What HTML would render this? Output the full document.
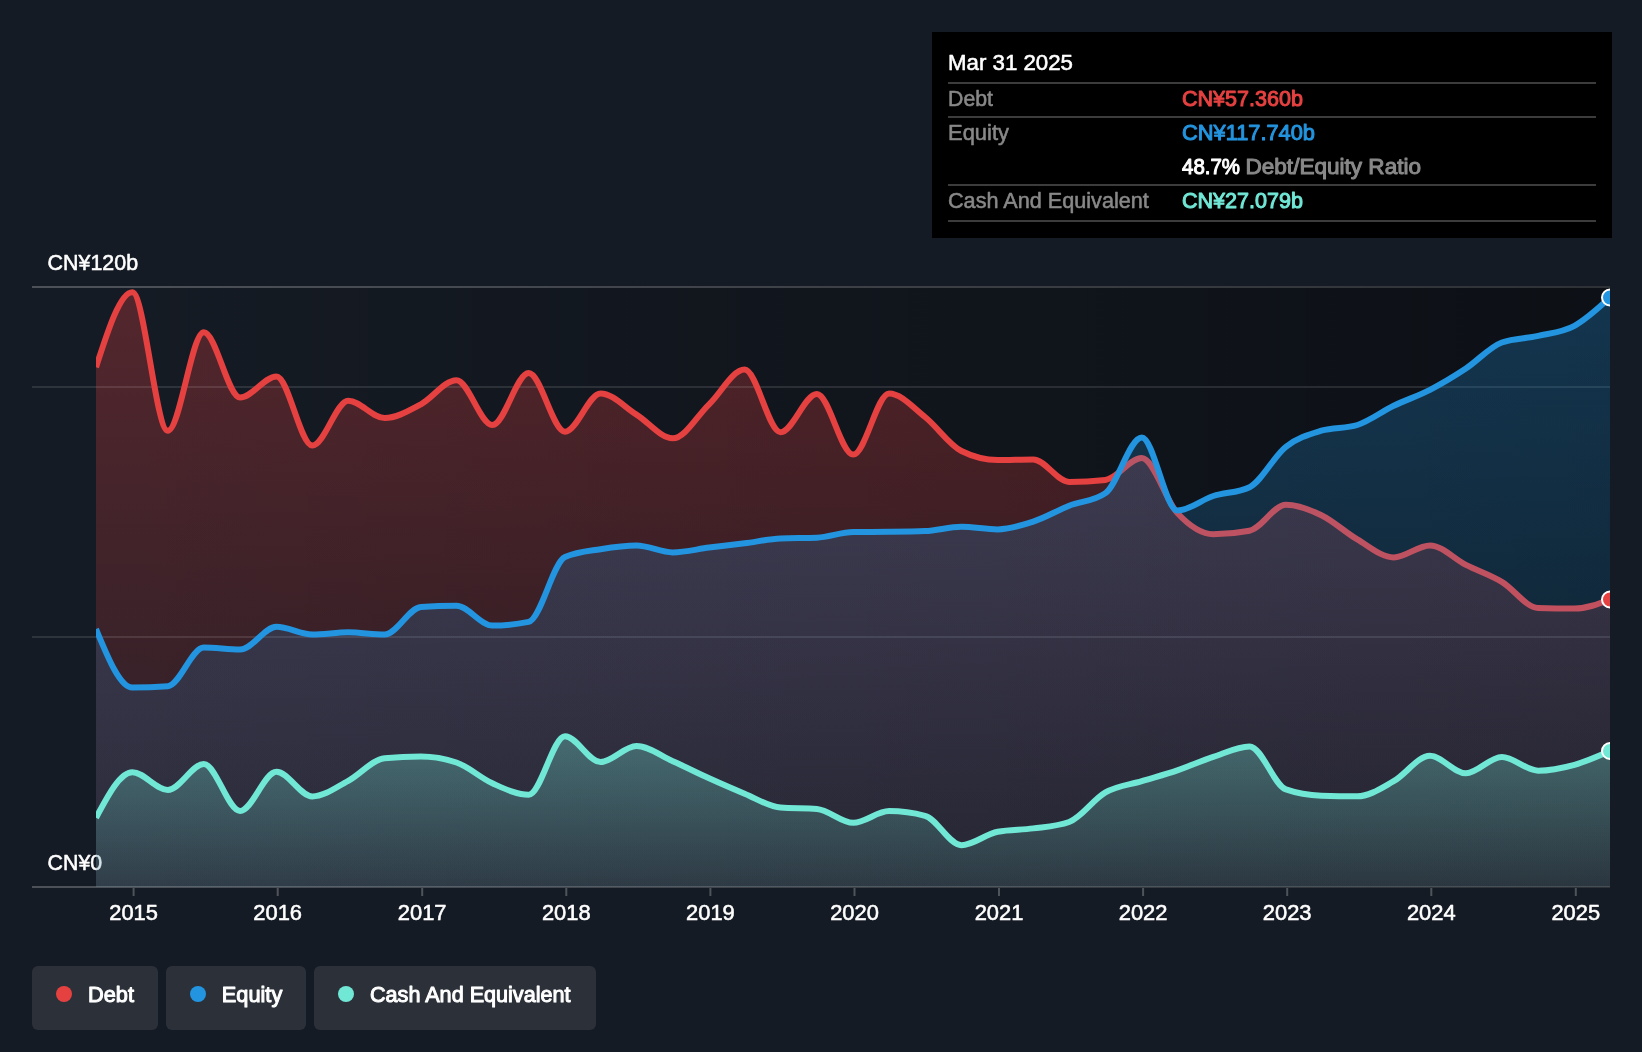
<!DOCTYPE html>
<html><head><meta charset="utf-8"><title>Debt to Equity History</title>
<style>
html,body{margin:0;padding:0;background:#151b24;}
body{width:1642px;height:1052px;overflow:hidden;font-family:"Liberation Sans",sans-serif;}
svg{display:block;}
text{font-family:"Liberation Sans",sans-serif;}
</style></head><body>
<svg width="1642" height="1052" viewBox="0 0 1642 1052" font-family="'Liberation Sans', sans-serif">
<defs>
<linearGradient id="plotbg" x1="0" y1="0" x2="1" y2="0">
<stop offset="0" stop-color="#000" stop-opacity="0"/>
<stop offset="1" stop-color="#000" stop-opacity="0.40"/>
</linearGradient>
<linearGradient id="gDebt" gradientUnits="userSpaceOnUse" x1="0" y1="292" x2="0" y2="887">
<stop offset="0" stop-color="#e64141" stop-opacity="0.30"/>
<stop offset="1" stop-color="#e64141" stop-opacity="0.10"/>
</linearGradient>
<linearGradient id="gEquity" gradientUnits="userSpaceOnUse" x1="0" y1="297" x2="0" y2="887">
<stop offset="0" stop-color="#2394df" stop-opacity="0.28"/>
<stop offset="1" stop-color="#2394df" stop-opacity="0.10"/>
</linearGradient>
<linearGradient id="gCash" gradientUnits="userSpaceOnUse" x1="0" y1="736" x2="0" y2="887">
<stop offset="0" stop-color="#71e7d6" stop-opacity="0.33"/>
<stop offset="1" stop-color="#71e7d6" stop-opacity="0.10"/>
</linearGradient>
<mask id="tm" maskUnits="userSpaceOnUse" x="0" y="0" width="1642" height="1052"><rect x="0" y="0" width="1642" height="1052" fill="#fff"/></mask>
<clipPath id="clip"><rect x="96" y="270" width="1514" height="640"/></clipPath>
</defs>
<rect width="1642" height="1052" fill="#151b24"/>
<rect x="32" y="286" width="1578" height="2" fill="#fff" fill-opacity="0.24"/>
<rect x="32" y="886" width="1578" height="2" fill="#fff" fill-opacity="0.24"/>
<rect x="96" y="286" width="1514" height="602" fill="url(#plotbg)"/>
<g mask="url(#tm)"><text x="47.6" y="269.8" fill="#fff" stroke="#fff" stroke-width="0.55" stroke-linejoin="round" font-size="21.95" text-anchor="start" textLength="90.5" lengthAdjust="spacingAndGlyphs">CN¥120b</text></g>
<g mask="url(#tm)"><text x="47.6" y="869.8" fill="#fff" stroke="#fff" stroke-width="0.55" stroke-linejoin="round" font-size="21.95" text-anchor="start" textLength="54.5" lengthAdjust="spacingAndGlyphs">CN¥0</text></g>
<g clip-path="url(#clip)">
<path d="M96.00,367.30C108.11,329.75,120.21,292.20,132.32,292.20C144.16,292.20,156.01,430.80,167.85,430.80C179.83,430.80,191.80,332.30,203.78,332.30C215.88,332.30,227.99,397.50,240.10,397.50C252.20,397.50,264.31,376.40,276.42,376.40C288.39,376.40,300.37,445.60,312.34,445.60C324.32,445.60,336.29,400.70,348.27,400.70C360.37,400.70,372.48,418.00,384.59,418.00C396.69,418.00,408.80,410.71,420.91,404.30C432.75,398.03,444.60,380.20,456.44,380.20C468.41,380.20,480.39,425.00,492.36,425.00C504.47,425.00,516.58,373.10,528.68,373.10C540.79,373.10,552.90,431.70,565.00,431.70C576.85,431.70,588.69,393.40,600.54,393.40C612.51,393.40,624.49,407.16,636.46,414.60C648.57,422.12,660.67,438.30,672.78,438.30C684.89,438.30,696.99,415.88,709.10,404.30C720.94,392.97,732.79,369.60,744.63,369.60C756.61,369.60,768.58,432.20,780.56,432.20C792.66,432.20,804.77,394.00,816.88,394.00C828.98,394.00,841.09,454.60,853.20,454.60C865.17,454.60,877.15,393.40,889.12,393.40C901.10,393.40,913.07,407.47,925.05,417.00C937.15,426.63,949.26,445.00,961.37,451.00C973.48,457.00,985.58,460.00,997.69,460.00C1009.53,460.00,1021.38,459.40,1033.22,459.40C1045.19,459.40,1057.17,481.90,1069.14,481.90C1081.25,481.90,1093.36,481.23,1105.46,479.90C1117.57,478.57,1129.68,458.00,1141.79,458.00C1153.63,458.00,1165.47,500.31,1177.32,513.00C1189.29,525.83,1201.27,534.20,1213.24,534.20C1225.35,534.20,1237.45,533.03,1249.56,530.70C1261.67,528.37,1273.77,504.70,1285.88,504.70C1297.73,504.70,1309.57,509.47,1321.41,515.20C1333.39,520.99,1345.36,532.39,1357.34,539.40C1369.44,546.48,1381.55,557.40,1393.66,557.40C1405.76,557.40,1417.87,545.40,1429.98,545.40C1441.95,545.40,1453.93,558.82,1465.90,564.90C1477.88,570.98,1489.85,574.77,1501.83,581.90C1513.94,589.11,1526.04,607.60,1538.15,608.00C1550.26,608.40,1562.36,608.60,1574.47,608.60C1586.31,608.60,1598.16,604.05,1610.00,599.50L1610.00,887.00L96.00,887.00Z" fill="url(#gDebt)" stroke="none"/>
</g>
<rect x="32" y="386" width="1578" height="2" fill="#fff" fill-opacity="0.11"/>
<rect x="32" y="636" width="1578" height="2" fill="#fff" fill-opacity="0.11"/>
<g clip-path="url(#clip)">
<path d="M96.00,367.30C108.11,329.75,120.21,292.20,132.32,292.20C144.16,292.20,156.01,430.80,167.85,430.80C179.83,430.80,191.80,332.30,203.78,332.30C215.88,332.30,227.99,397.50,240.10,397.50C252.20,397.50,264.31,376.40,276.42,376.40C288.39,376.40,300.37,445.60,312.34,445.60C324.32,445.60,336.29,400.70,348.27,400.70C360.37,400.70,372.48,418.00,384.59,418.00C396.69,418.00,408.80,410.71,420.91,404.30C432.75,398.03,444.60,380.20,456.44,380.20C468.41,380.20,480.39,425.00,492.36,425.00C504.47,425.00,516.58,373.10,528.68,373.10C540.79,373.10,552.90,431.70,565.00,431.70C576.85,431.70,588.69,393.40,600.54,393.40C612.51,393.40,624.49,407.16,636.46,414.60C648.57,422.12,660.67,438.30,672.78,438.30C684.89,438.30,696.99,415.88,709.10,404.30C720.94,392.97,732.79,369.60,744.63,369.60C756.61,369.60,768.58,432.20,780.56,432.20C792.66,432.20,804.77,394.00,816.88,394.00C828.98,394.00,841.09,454.60,853.20,454.60C865.17,454.60,877.15,393.40,889.12,393.40C901.10,393.40,913.07,407.47,925.05,417.00C937.15,426.63,949.26,445.00,961.37,451.00C973.48,457.00,985.58,460.00,997.69,460.00C1009.53,460.00,1021.38,459.40,1033.22,459.40C1045.19,459.40,1057.17,481.90,1069.14,481.90C1081.25,481.90,1093.36,481.23,1105.46,479.90C1117.57,478.57,1129.68,458.00,1141.79,458.00C1153.63,458.00,1165.47,500.31,1177.32,513.00C1189.29,525.83,1201.27,534.20,1213.24,534.20C1225.35,534.20,1237.45,533.03,1249.56,530.70C1261.67,528.37,1273.77,504.70,1285.88,504.70C1297.73,504.70,1309.57,509.47,1321.41,515.20C1333.39,520.99,1345.36,532.39,1357.34,539.40C1369.44,546.48,1381.55,557.40,1393.66,557.40C1405.76,557.40,1417.87,545.40,1429.98,545.40C1441.95,545.40,1453.93,558.82,1465.90,564.90C1477.88,570.98,1489.85,574.77,1501.83,581.90C1513.94,589.11,1526.04,607.60,1538.15,608.00C1550.26,608.40,1562.36,608.60,1574.47,608.60C1586.31,608.60,1598.16,604.05,1610.00,599.50" fill="none" stroke="#e64141" stroke-width="6" stroke-linejoin="round"/>
<path d="M96.00,629.00C108.11,658.30,120.21,687.60,132.32,687.60C144.16,687.60,156.01,687.13,167.85,686.20C179.83,685.26,191.80,647.60,203.78,647.60C215.88,647.60,227.99,649.60,240.10,649.60C252.20,649.60,264.31,626.80,276.42,626.80C288.39,626.80,300.37,634.60,312.34,634.60C324.32,634.60,336.29,632.30,348.27,632.30C360.37,632.30,372.48,634.60,384.59,634.60C396.69,634.60,408.80,607.99,420.91,607.10C432.75,606.23,444.60,605.80,456.44,605.80C468.41,605.80,480.39,625.60,492.36,625.60C504.47,625.60,516.58,624.37,528.68,621.90C540.79,619.43,552.90,562.32,565.00,557.00C576.85,551.80,588.69,551.11,600.54,549.20C612.51,547.27,624.49,545.50,636.46,545.50C648.57,545.50,660.67,552.40,672.78,552.40C684.89,552.40,696.99,549.13,709.10,547.60C720.94,546.10,732.79,544.81,744.63,543.30C756.61,541.78,768.58,539.03,780.56,538.50C792.66,537.97,804.77,538.23,816.88,537.70C828.98,537.17,841.09,532.13,853.20,532.00C865.17,531.87,877.15,531.93,889.12,531.80C901.10,531.67,913.07,531.57,925.05,531.10C937.15,530.63,949.26,526.80,961.37,526.80C973.48,526.80,985.58,529.40,997.69,529.40C1009.53,529.40,1021.38,525.60,1033.22,521.70C1045.19,517.76,1057.17,510.55,1069.14,505.80C1081.25,501.00,1093.36,501.57,1105.46,493.10C1117.57,484.63,1129.68,437.40,1141.79,437.40C1153.63,437.40,1165.47,510.50,1177.32,510.50C1189.29,510.50,1201.27,499.87,1213.24,496.00C1225.35,492.08,1237.45,493.07,1249.56,487.20C1261.67,481.33,1273.77,456.23,1285.88,446.80C1297.73,437.57,1309.57,434.33,1321.41,430.70C1333.39,427.03,1345.36,428.80,1357.34,425.00C1369.44,421.16,1381.55,411.67,1393.66,405.80C1405.76,399.93,1417.87,396.06,1429.98,389.80C1441.95,383.61,1453.93,376.38,1465.90,368.50C1477.88,360.62,1489.85,346.85,1501.83,342.50C1513.94,338.10,1526.04,338.68,1538.15,335.90C1550.26,333.12,1562.36,332.34,1574.47,325.80C1586.31,319.40,1598.16,308.45,1610.00,297.50L1610.00,887.00L96.00,887.00Z" fill="url(#gEquity)" stroke="none"/>
<path d="M96.00,629.00C108.11,658.30,120.21,687.60,132.32,687.60C144.16,687.60,156.01,687.13,167.85,686.20C179.83,685.26,191.80,647.60,203.78,647.60C215.88,647.60,227.99,649.60,240.10,649.60C252.20,649.60,264.31,626.80,276.42,626.80C288.39,626.80,300.37,634.60,312.34,634.60C324.32,634.60,336.29,632.30,348.27,632.30C360.37,632.30,372.48,634.60,384.59,634.60C396.69,634.60,408.80,607.99,420.91,607.10C432.75,606.23,444.60,605.80,456.44,605.80C468.41,605.80,480.39,625.60,492.36,625.60C504.47,625.60,516.58,624.37,528.68,621.90C540.79,619.43,552.90,562.32,565.00,557.00C576.85,551.80,588.69,551.11,600.54,549.20C612.51,547.27,624.49,545.50,636.46,545.50C648.57,545.50,660.67,552.40,672.78,552.40C684.89,552.40,696.99,549.13,709.10,547.60C720.94,546.10,732.79,544.81,744.63,543.30C756.61,541.78,768.58,539.03,780.56,538.50C792.66,537.97,804.77,538.23,816.88,537.70C828.98,537.17,841.09,532.13,853.20,532.00C865.17,531.87,877.15,531.93,889.12,531.80C901.10,531.67,913.07,531.57,925.05,531.10C937.15,530.63,949.26,526.80,961.37,526.80C973.48,526.80,985.58,529.40,997.69,529.40C1009.53,529.40,1021.38,525.60,1033.22,521.70C1045.19,517.76,1057.17,510.55,1069.14,505.80C1081.25,501.00,1093.36,501.57,1105.46,493.10C1117.57,484.63,1129.68,437.40,1141.79,437.40C1153.63,437.40,1165.47,510.50,1177.32,510.50C1189.29,510.50,1201.27,499.87,1213.24,496.00C1225.35,492.08,1237.45,493.07,1249.56,487.20C1261.67,481.33,1273.77,456.23,1285.88,446.80C1297.73,437.57,1309.57,434.33,1321.41,430.70C1333.39,427.03,1345.36,428.80,1357.34,425.00C1369.44,421.16,1381.55,411.67,1393.66,405.80C1405.76,399.93,1417.87,396.06,1429.98,389.80C1441.95,383.61,1453.93,376.38,1465.90,368.50C1477.88,360.62,1489.85,346.85,1501.83,342.50C1513.94,338.10,1526.04,338.68,1538.15,335.90C1550.26,333.12,1562.36,332.34,1574.47,325.80C1586.31,319.40,1598.16,308.45,1610.00,297.50" fill="none" stroke="#2394df" stroke-width="6" stroke-linejoin="round"/>
<path d="M96.00,817.80C108.11,795.00,120.21,772.20,132.32,772.20C144.16,772.20,156.01,790.00,167.85,790.00C179.83,790.00,191.80,764.00,203.78,764.00C215.88,764.00,227.99,811.00,240.10,811.00C252.20,811.00,264.31,771.80,276.42,771.80C288.39,771.80,300.37,796.40,312.34,796.40C324.32,796.40,336.29,787.12,348.27,780.80C360.37,774.41,372.48,759.27,384.59,758.20C396.69,757.13,408.80,756.60,420.91,756.60C432.75,756.60,444.60,758.57,456.44,762.50C468.41,766.48,480.39,777.93,492.36,783.30C504.47,788.73,516.58,794.80,528.68,794.80C540.79,794.80,552.90,736.20,565.00,736.20C576.85,736.20,588.69,762.10,600.54,762.10C612.51,762.10,624.49,746.10,636.46,746.10C648.57,746.10,660.67,755.83,672.78,761.20C684.89,766.57,696.99,772.83,709.10,778.30C720.94,783.65,732.79,788.84,744.63,793.70C756.61,798.61,768.58,806.74,780.56,807.60C792.66,808.47,804.77,808.03,816.88,808.90C828.98,809.77,841.09,822.80,853.20,822.80C865.17,822.80,877.15,811.10,889.12,811.10C901.10,811.10,913.07,812.67,925.05,815.80C937.15,818.97,949.26,845.20,961.37,845.20C973.48,845.20,985.58,833.95,997.69,831.70C1009.53,829.50,1021.38,830.00,1033.22,828.40C1045.19,826.78,1057.17,826.27,1069.14,822.00C1081.25,817.69,1093.36,799.22,1105.46,792.40C1117.57,785.58,1129.68,784.82,1141.79,781.10C1153.63,777.46,1165.47,774.31,1177.32,770.30C1189.29,766.25,1201.27,760.87,1213.24,756.90C1225.35,752.89,1237.45,746.40,1249.56,746.40C1261.67,746.40,1273.77,785.11,1285.88,789.40C1297.73,793.60,1309.57,795.30,1321.41,795.70C1333.39,796.10,1345.36,796.30,1357.34,796.30C1369.44,796.30,1381.55,787.95,1393.66,781.20C1405.76,774.45,1417.87,755.80,1429.98,755.80C1441.95,755.80,1453.93,773.30,1465.90,773.30C1477.88,773.30,1489.85,756.90,1501.83,756.90C1513.94,756.90,1526.04,770.70,1538.15,770.70C1550.26,770.70,1562.36,768.15,1574.47,764.80C1586.31,761.52,1598.16,756.26,1610.00,751.00L1610.00,887.00L96.00,887.00Z" fill="url(#gCash)" stroke="none"/>
<path d="M96.00,817.80C108.11,795.00,120.21,772.20,132.32,772.20C144.16,772.20,156.01,790.00,167.85,790.00C179.83,790.00,191.80,764.00,203.78,764.00C215.88,764.00,227.99,811.00,240.10,811.00C252.20,811.00,264.31,771.80,276.42,771.80C288.39,771.80,300.37,796.40,312.34,796.40C324.32,796.40,336.29,787.12,348.27,780.80C360.37,774.41,372.48,759.27,384.59,758.20C396.69,757.13,408.80,756.60,420.91,756.60C432.75,756.60,444.60,758.57,456.44,762.50C468.41,766.48,480.39,777.93,492.36,783.30C504.47,788.73,516.58,794.80,528.68,794.80C540.79,794.80,552.90,736.20,565.00,736.20C576.85,736.20,588.69,762.10,600.54,762.10C612.51,762.10,624.49,746.10,636.46,746.10C648.57,746.10,660.67,755.83,672.78,761.20C684.89,766.57,696.99,772.83,709.10,778.30C720.94,783.65,732.79,788.84,744.63,793.70C756.61,798.61,768.58,806.74,780.56,807.60C792.66,808.47,804.77,808.03,816.88,808.90C828.98,809.77,841.09,822.80,853.20,822.80C865.17,822.80,877.15,811.10,889.12,811.10C901.10,811.10,913.07,812.67,925.05,815.80C937.15,818.97,949.26,845.20,961.37,845.20C973.48,845.20,985.58,833.95,997.69,831.70C1009.53,829.50,1021.38,830.00,1033.22,828.40C1045.19,826.78,1057.17,826.27,1069.14,822.00C1081.25,817.69,1093.36,799.22,1105.46,792.40C1117.57,785.58,1129.68,784.82,1141.79,781.10C1153.63,777.46,1165.47,774.31,1177.32,770.30C1189.29,766.25,1201.27,760.87,1213.24,756.90C1225.35,752.89,1237.45,746.40,1249.56,746.40C1261.67,746.40,1273.77,785.11,1285.88,789.40C1297.73,793.60,1309.57,795.30,1321.41,795.70C1333.39,796.10,1345.36,796.30,1357.34,796.30C1369.44,796.30,1381.55,787.95,1393.66,781.20C1405.76,774.45,1417.87,755.80,1429.98,755.80C1441.95,755.80,1453.93,773.30,1465.90,773.30C1477.88,773.30,1489.85,756.90,1501.83,756.90C1513.94,756.90,1526.04,770.70,1538.15,770.70C1550.26,770.70,1562.36,768.15,1574.47,764.80C1586.31,761.52,1598.16,756.26,1610.00,751.00" fill="none" stroke="#71e7d6" stroke-width="6" stroke-linejoin="round"/>
<circle cx="1610.0" cy="599.5" r="8" fill="#e64141" stroke="#fff" stroke-width="2"/>
<circle cx="1610.0" cy="297.5" r="8" fill="#2394df" stroke="#fff" stroke-width="2"/>
<circle cx="1610.0" cy="751.0" r="8" fill="#71e7d6" stroke="#fff" stroke-width="2"/>
</g>
<rect x="132.6" y="888" width="2" height="8" fill="#fff" fill-opacity="0.25"/>
<g mask="url(#tm)"><text x="133.6" y="920.0" fill="#fff" stroke="#fff" stroke-width="0.55" stroke-linejoin="round" font-size="21.95" text-anchor="middle" textLength="48.7" lengthAdjust="spacingAndGlyphs">2015</text></g>
<rect x="276.7" y="888" width="2" height="8" fill="#fff" fill-opacity="0.25"/>
<g mask="url(#tm)"><text x="277.7" y="920.0" fill="#fff" stroke="#fff" stroke-width="0.55" stroke-linejoin="round" font-size="21.95" text-anchor="middle" textLength="48.7" lengthAdjust="spacingAndGlyphs">2016</text></g>
<rect x="421.2" y="888" width="2" height="8" fill="#fff" fill-opacity="0.25"/>
<g mask="url(#tm)"><text x="422.2" y="920.0" fill="#fff" stroke="#fff" stroke-width="0.55" stroke-linejoin="round" font-size="21.95" text-anchor="middle" textLength="48.7" lengthAdjust="spacingAndGlyphs">2017</text></g>
<rect x="565.3" y="888" width="2" height="8" fill="#fff" fill-opacity="0.25"/>
<g mask="url(#tm)"><text x="566.3" y="920.0" fill="#fff" stroke="#fff" stroke-width="0.55" stroke-linejoin="round" font-size="21.95" text-anchor="middle" textLength="48.7" lengthAdjust="spacingAndGlyphs">2018</text></g>
<rect x="709.4" y="888" width="2" height="8" fill="#fff" fill-opacity="0.25"/>
<g mask="url(#tm)"><text x="710.4" y="920.0" fill="#fff" stroke="#fff" stroke-width="0.55" stroke-linejoin="round" font-size="21.95" text-anchor="middle" textLength="48.7" lengthAdjust="spacingAndGlyphs">2019</text></g>
<rect x="853.5" y="888" width="2" height="8" fill="#fff" fill-opacity="0.25"/>
<g mask="url(#tm)"><text x="854.5" y="920.0" fill="#fff" stroke="#fff" stroke-width="0.55" stroke-linejoin="round" font-size="21.95" text-anchor="middle" textLength="48.7" lengthAdjust="spacingAndGlyphs">2020</text></g>
<rect x="998.0" y="888" width="2" height="8" fill="#fff" fill-opacity="0.25"/>
<g mask="url(#tm)"><text x="999.0" y="920.0" fill="#fff" stroke="#fff" stroke-width="0.55" stroke-linejoin="round" font-size="21.95" text-anchor="middle" textLength="48.7" lengthAdjust="spacingAndGlyphs">2021</text></g>
<rect x="1142.1" y="888" width="2" height="8" fill="#fff" fill-opacity="0.25"/>
<g mask="url(#tm)"><text x="1143.1" y="920.0" fill="#fff" stroke="#fff" stroke-width="0.55" stroke-linejoin="round" font-size="21.95" text-anchor="middle" textLength="48.7" lengthAdjust="spacingAndGlyphs">2022</text></g>
<rect x="1286.2" y="888" width="2" height="8" fill="#fff" fill-opacity="0.25"/>
<g mask="url(#tm)"><text x="1287.2" y="920.0" fill="#fff" stroke="#fff" stroke-width="0.55" stroke-linejoin="round" font-size="21.95" text-anchor="middle" textLength="48.7" lengthAdjust="spacingAndGlyphs">2023</text></g>
<rect x="1430.3" y="888" width="2" height="8" fill="#fff" fill-opacity="0.25"/>
<g mask="url(#tm)"><text x="1431.3" y="920.0" fill="#fff" stroke="#fff" stroke-width="0.55" stroke-linejoin="round" font-size="21.95" text-anchor="middle" textLength="48.7" lengthAdjust="spacingAndGlyphs">2024</text></g>
<rect x="1574.8" y="888" width="2" height="8" fill="#fff" fill-opacity="0.25"/>
<g mask="url(#tm)"><text x="1575.8" y="920.0" fill="#fff" stroke="#fff" stroke-width="0.55" stroke-linejoin="round" font-size="21.95" text-anchor="middle" textLength="48.7" lengthAdjust="spacingAndGlyphs">2025</text></g>
<rect x="932" y="32" width="680" height="206" fill="#000"/>
<rect x="948" y="82.0" width="648" height="2" fill="#3c3c3c"/>
<rect x="948" y="116.0" width="648" height="2" fill="#3c3c3c"/>
<rect x="948" y="184.0" width="648" height="2" fill="#3c3c3c"/>
<rect x="948" y="220.0" width="648" height="2" fill="#3c3c3c"/>
<g mask="url(#tm)"><text x="948.0" y="69.8" fill="#fff" stroke="#fff" stroke-width="0.55" stroke-linejoin="round" font-size="21.95" text-anchor="start" textLength="125.0" lengthAdjust="spacingAndGlyphs">Mar 31 2025</text></g>
<g mask="url(#tm)"><text x="948.0" y="106.0" fill="#888888" stroke="#888888" stroke-width="0.55" stroke-linejoin="round" font-size="21.95" text-anchor="start" textLength="45.0" lengthAdjust="spacingAndGlyphs">Debt</text></g>
<g mask="url(#tm)"><text x="1182.0" y="106.0" fill="#e64141" stroke="#e64141" stroke-width="1.00" stroke-linejoin="round" font-size="21.30" text-anchor="start" textLength="121.0" lengthAdjust="spacingAndGlyphs">CN¥57.360b</text></g>
<g mask="url(#tm)"><text x="948.0" y="139.5" fill="#888888" stroke="#888888" stroke-width="0.55" stroke-linejoin="round" font-size="21.95" text-anchor="start" textLength="61.0" lengthAdjust="spacingAndGlyphs">Equity</text></g>
<g mask="url(#tm)"><text x="1182.0" y="139.5" fill="#2394df" stroke="#2394df" stroke-width="1.00" stroke-linejoin="round" font-size="21.30" text-anchor="start" textLength="133.0" lengthAdjust="spacingAndGlyphs">CN¥117.740b</text></g>
<g mask="url(#tm)"><text x="1182.0" y="173.5" fill="#fff" stroke="#fff" stroke-width="1.00" stroke-linejoin="round" font-size="21.30" text-anchor="start" textLength="58.0" lengthAdjust="spacingAndGlyphs">48.7%</text></g>
<g mask="url(#tm)"><text x="1245.5" y="173.5" fill="#888888" stroke="#888888" stroke-width="1.00" stroke-linejoin="round" font-size="21.30" text-anchor="start" textLength="175.5" lengthAdjust="spacingAndGlyphs">Debt/Equity Ratio</text></g>
<g mask="url(#tm)"><text x="948.0" y="207.5" fill="#888888" stroke="#888888" stroke-width="0.55" stroke-linejoin="round" font-size="21.95" text-anchor="start" textLength="200.8" lengthAdjust="spacingAndGlyphs">Cash And Equivalent</text></g>
<g mask="url(#tm)"><text x="1182.0" y="207.5" fill="#71e7d6" stroke="#71e7d6" stroke-width="1.00" stroke-linejoin="round" font-size="21.30" text-anchor="start" textLength="121.0" lengthAdjust="spacingAndGlyphs">CN¥27.079b</text></g>
<rect x="32" y="966" width="126" height="64" rx="6" fill="#2b3039"/>
<circle cx="64" cy="994" r="8" fill="#e64141"/>
<g mask="url(#tm)"><text x="88.0" y="1001.7" fill="#fff" stroke="#fff" stroke-width="1.00" stroke-linejoin="round" font-size="21.30" text-anchor="start" textLength="46.0" lengthAdjust="spacingAndGlyphs">Debt</text></g>
<rect x="166" y="966" width="140" height="64" rx="6" fill="#2b3039"/>
<circle cx="198" cy="994" r="8" fill="#2394df"/>
<g mask="url(#tm)"><text x="221.8" y="1001.7" fill="#fff" stroke="#fff" stroke-width="1.00" stroke-linejoin="round" font-size="21.30" text-anchor="start" textLength="60.5" lengthAdjust="spacingAndGlyphs">Equity</text></g>
<rect x="314" y="966" width="282" height="64" rx="6" fill="#2b3039"/>
<circle cx="346" cy="994" r="8" fill="#71e7d6"/>
<g mask="url(#tm)"><text x="370.0" y="1001.7" fill="#fff" stroke="#fff" stroke-width="1.00" stroke-linejoin="round" font-size="21.30" text-anchor="start" textLength="200.5" lengthAdjust="spacingAndGlyphs">Cash And Equivalent</text></g>
</svg>
</body></html>
